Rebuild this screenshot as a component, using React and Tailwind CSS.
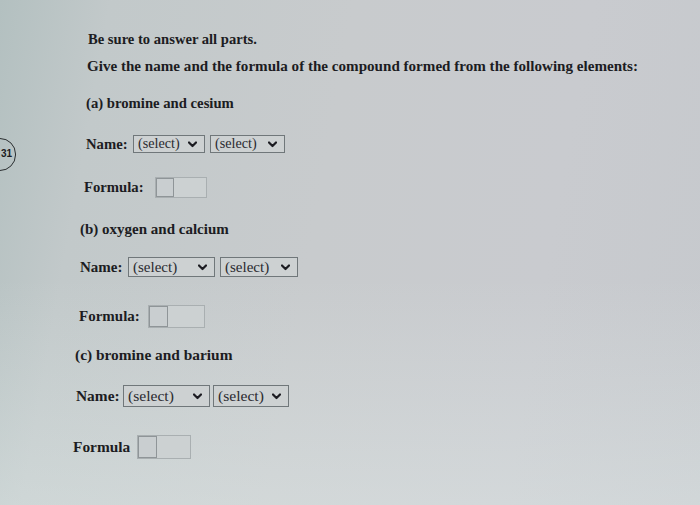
import React from "react";

function Chevron() {
  return (
    <svg width="9" height="7" viewBox="0 0 9 7" className="shrink-0">
      <path d="M1 1.5 L4.5 5 L8 1.5" fill="none" stroke="#1c1c22" strokeWidth="2.2" strokeLinecap="round" strokeLinejoin="round" />
    </svg>
  );
}

function Select({ w, h, size }) {
  return (
    <div
      className="flex items-center justify-between border border-[#70777a] bg-[#cdd1d2] pl-[4px] pr-[7px] font-normal text-[#2a2a30]"
      style={{ width: w, height: h, fontSize: size }}
    >
      <span>(select)</span>
      <Chevron />
    </div>
  );
}

function FormulaBox({ w, h, inner }) {
  return (
    <div className="flex border border-[#a9afb1] bg-[#ccd1d2]" style={{ width: w, height: h }}>
      <div className="h-full border border-[#8f9598] bg-[#c9ced0]" style={{ width: inner }} />
    </div>
  );
}

export default function App() {
  return (
    <div
      className="relative h-[505px] w-[700px] overflow-hidden bg-[linear-gradient(100deg,#b3c0c0_0%,#c2c9ca_14%,#c8cbcd_45%,#c9cbcf_75%,#c6c9cd_100%)] text-[#1c1c22]"
      style={{ fontFamily: '"Liberation Serif", "Times New Roman", serif' }}
    >
      <div className="absolute inset-0 bg-[linear-gradient(180deg,rgba(255,255,255,0)_0%,rgba(255,255,255,0)_55%,rgba(230,240,238,0.35)_100%)]" />

      <div className="absolute left-[-16px] top-[138px] h-[33px] w-[32px] rounded-full border-[1.5px] border-[#2a2e30]" />
      <div
        className="absolute left-[1px] top-[148px] text-[10px] font-bold leading-[12px] text-[#1c1c22]"
        style={{ fontFamily: '"Liberation Sans", Arial, sans-serif' }}
      >
        31
      </div>

      <div className="relative flex flex-col pt-[28px] font-bold">
        <div className="ml-[88px] flex h-[24px] items-center text-[14.6px]">Be sure to answer all parts.</div>
        <div className="ml-[87px] mt-[2px] flex h-[24px] items-center text-[15.1px]">
          Give the name and the formula of the compound formed from the following elements:
        </div>
        <div className="ml-[86px] mt-[13px] flex h-[24px] items-center text-[14.7px]">(a) bromine and cesium</div>
        <div className="ml-[86px] mt-[17px] flex h-[24px] items-center gap-[5px] text-[14.7px]">
          <span className="w-[42px]">Name:</span>
          <Select w={72} h={18} size={14.2} />
          <Select w={75} h={18} size={14.2} />
        </div>
        <div className="ml-[84px] mt-[19px] flex h-[24px] items-center gap-[4px] text-[14.7px]">
          <span className="w-[67px]">Formula:</span>
          <FormulaBox w={52} h={21} inner={18} />
        </div>
        <div className="ml-[80px] mt-[18px] flex h-[24px] items-center text-[15px]">(b) oxygen and calcium</div>
        <div className="ml-[80px] mt-[14px] flex h-[24px] items-center gap-[5px] text-[15px]">
          <span className="w-[43px]">Name:</span>
          <Select w={87} h={20} size={15} />
          <Select w={78} h={20} size={15} />
        </div>
        <div className="ml-[79px] mt-[25px] flex h-[24px] items-center gap-[2px] text-[15px]">
          <span className="w-[67px]">Formula:</span>
          <FormulaBox w={57} h={23} inner={19} />
        </div>
        <div className="ml-[75px] mt-[15px] flex h-[24px] items-center text-[15.4px]">(c) bromine and barium</div>
        <div className="ml-[76px] mt-[17px] flex h-[24px] items-center gap-[3px] text-[15.4px]">
          <span className="w-[44px] whitespace-nowrap">Name:</span>
          <Select w={87} h={22} size={15.6} />
          <Select w={76} h={22} size={15.6} />
        </div>
        <div className="ml-[73px] mt-[27px] flex h-[24px] items-center gap-[2px] text-[15.4px]">
          <span className="w-[62px]">Formula</span>
          <FormulaBox w={54} h={24} inner={19} />
        </div>
      </div>
    </div>
  );
}
